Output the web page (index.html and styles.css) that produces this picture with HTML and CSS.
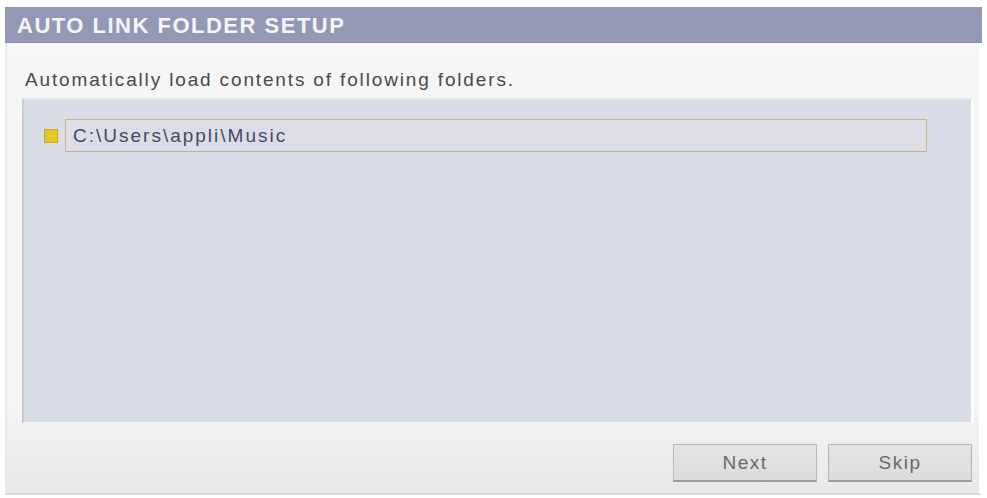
FILE: index.html
```html
<!DOCTYPE html>
<html lang="en">
<head>
    <meta charset="UTF-8">
    <title>Auto Link Folder Setup</title>
    <link rel="stylesheet" href="styles.css">
</head>
<body>
    <div class="dialog">
        <div class="title-bar">AUTO LINK FOLDER SETUP</div>
        <div class="content">
            <p class="intro">Automatically load contents of following folders.</p>
            <div class="folder-list">
                <div class="folder-row">
                    <span class="check"></span>
                    <div class="folder-path">C:\Users\appli\Music</div>
                </div>
            </div>
            <div class="buttons">
                <button class="btn">Next</button>
                <button class="btn">Skip</button>
            </div>
        </div>
    </div>
</body>
</html>
```
FILE: styles.css
```css
body {
    margin: 0;
    padding: 7px 0 0 5px;
    background-color: #ffffff;
    font-family: "Liberation Sans", Arial, sans-serif;
}
.dialog {
    width: 977px;
    height: 488px;
    display: flex;
    flex-direction: column;
}
.title-bar {
    height: 35px;
    line-height: 38px;
    padding-left: 12px;
    background-color: #9398b4;
    border-bottom: 1px solid #8a8fa8;
    color: #f4f5fa;
    font-weight: bold;
    font-size: 22px;
    letter-spacing: 1.5px;
}
.content {
    flex: 1;
    display: flex;
    flex-direction: column;
    background: linear-gradient(to bottom, #f5f6f5 0%, #f3f4f3 80%, #e8e8e8 100%);
    border-left: 2px solid #e9eaea;
    border-right: 3px solid #ffffff;
    border-bottom: 2px solid #d6d6d6;
    padding: 0 7px 0 15px;
}
.intro {
    margin: 0;
    height: 37px;
    line-height: 37px;
    padding: 18px 0 0 3px;
    font-size: 19px;
    letter-spacing: 1.85px;
    color: #4a4a4a;
}
.folder-list {
    box-sizing: border-box;
    height: 326px;
    background-color: #d9dde7;
    border-top: 2px solid #e6e8ec;
    border-left: 2px solid #c8cad0;
    border-right: 3px solid #ffffff;
    border-bottom: 2px solid #f4f6fa;
    padding: 19px 0 0 20px;
    margin-right: -2px;
}
.folder-row {
    display: flex;
    align-items: center;
}
.check {
    width: 12px;
    height: 12px;
    background-color: #e2c82a;
    border: 1px solid #c9a63a;
    margin-right: 7px;
    box-shadow: 0 0 2px #efe080;
}
.folder-path {
    width: 853px;
    height: 31px;
    line-height: 31px;
    padding-left: 7px;
    background-color: #dcdde6;
    border: 1px solid #c6b880;
    border-bottom-color: #bfae90;
    font-size: 19px;
    letter-spacing: 2px;
    color: #45496a;
}
.buttons {
    flex: 1;
    display: flex;
    justify-content: flex-end;
    align-items: flex-start;
    gap: 11px;
    padding-top: 20px;
}
.btn {
    width: 144px;
    height: 38px;
    background: linear-gradient(to bottom, #e4e4e4, #dcdcdc);
    border: 1px solid #b8b8b8;
    border-bottom: 2px solid #9c9c9c;
    border-radius: 0;
    font-family: "Liberation Sans", Arial, sans-serif;
    font-size: 19px;
    letter-spacing: 1.5px;
    color: #6a6a6a;
}
```
